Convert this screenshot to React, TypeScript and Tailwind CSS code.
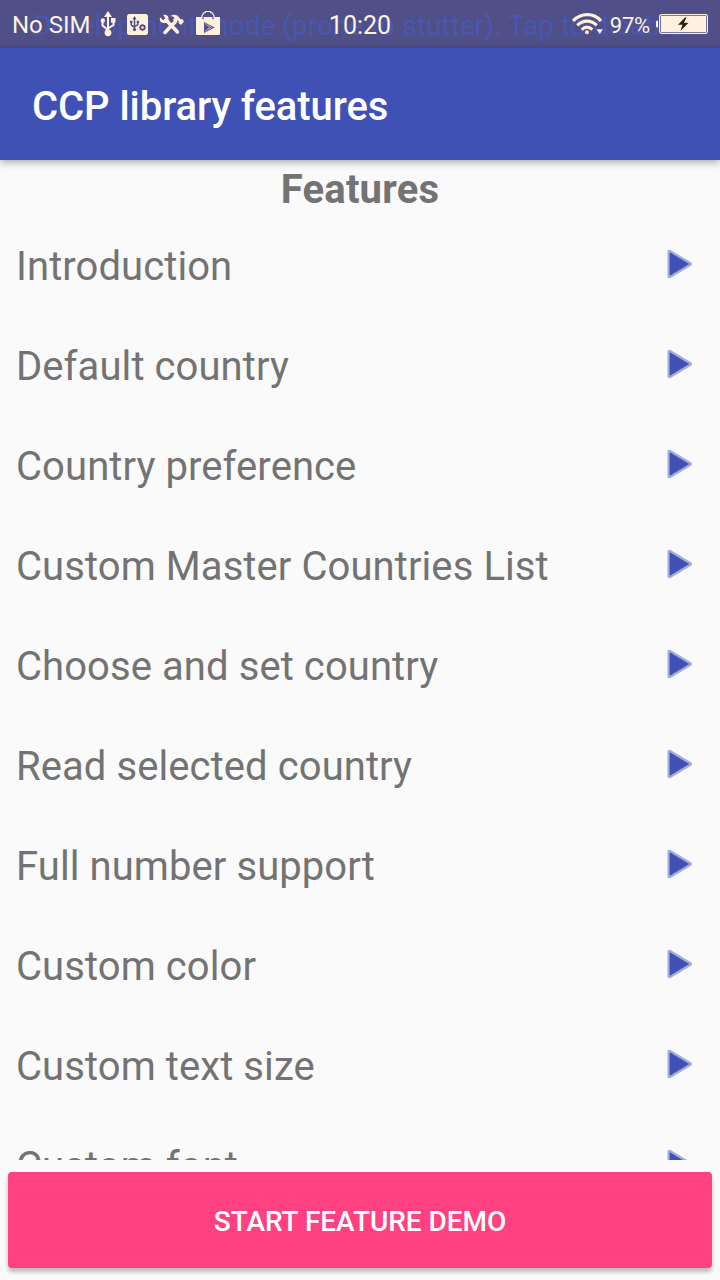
import React from "react";

const features = [
  "Introduction",
  "Default country",
  "Country preference",
  "Custom Master Countries List",
  "Choose and set country",
  "Read selected country",
  "Full number support",
  "Custom color",
  "Custom text size",
  "Custom font",
];

function PlayIcon() {
  return (
    <svg className="mt-[-4px] h-[32px] w-[32px] shrink-0" viewBox="0 0 32 32">
      <path d="M5.500 3.800 26 16 5.500 28.200Z" fill="#a4acda" stroke="#a4acda" strokeWidth="4" strokeLinejoin="round" />
      <path d="M6 4.800 24.600 16 6 27.200Z" fill="#3f51b5" stroke="#3f51b5" strokeWidth=".8" strokeLinejoin="round" />
    </svg>
  );
}

function UsbIcon() {
  return (
    <svg className="ml-[9px] h-[26px] w-[16px] shrink-0" viewBox="0 0 16 26" fill="none" stroke="#fff1dc" strokeWidth="2">
      <path d="M8 4v18M2.500 11v3.500L8 19M13.500 11v3L8 17.500" />
      <path d="M8 0 12 6H4Z" fill="#fff1dc" stroke="none" />
      <circle cx="8" cy="21.800" r="3.400" fill="#fff1dc" stroke="none" />
      <circle cx="2.800" cy="9.500" r="2.200" fill="#fff1dc" stroke="none" />
      <path d="M11 7h4.500v4.500H11z" fill="#fff1dc" stroke="none" />
    </svg>
  );
}

function UsbSettingsIcon() {
  return (
    <svg className="ml-[11px] h-[21px] w-[21px] shrink-0" viewBox="0 0 21 21" fill="none" stroke="#504f88" strokeWidth="1.500">
      <rect width="21" height="21" rx="2.500" fill="#fff1dc" stroke="none" />
      <path d="M7.500 4v12M4.300 8v3l3.200 2.300M10.800 8v2.700l-3.300 2.300" />
      <path d="M7.500 2 9.500 5.200h-4Z" fill="#504f88" stroke="none" />
      <circle cx="7.500" cy="15.600" r="1.600" fill="#504f88" stroke="none" />
      <path d="M3 6.700h2.400v2.300H3zM9.700 6.700H12V9H9.700z" fill="#504f88" stroke="none" />
      <circle cx="15.500" cy="13.500" r="2.100" strokeWidth="1.600" />
      <path d="M15.500 10.200v1.200M15.500 15.600v1.200M12.200 13.500h1.200M17.600 13.500h1.200M13.200 11.200l.9.900M16.900 14.900l.9.900M17.800 11.200l-.9.900M14.100 14.900l-.9.900" />
    </svg>
  );
}

function ToolsIcon() {
  return (
    <svg className="ml-[11px] h-[21px] w-[25px] shrink-0" viewBox="0 0 25 21" fill="none" stroke="#fff1dc">
      <path d="M7 6 18.500 18" strokeWidth="3.500" strokeLinecap="round" />
      <path d="M1 3.200 4.300 6.200 6.400 4.200 4.200 1C8.200.2 10.300 2.800 9.400 6.500L7 9C3 9.800 0 7.500 1 3.200Z" fill="#fff1dc" stroke="none" />
      <path d="M6 18.500 16.500 7.500" strokeWidth="3.500" strokeLinecap="round" />
      <path d="M11.500 2C15-.3 18.500.8 20.500 4L21.700 5.300 23.200 5 25 7.500 22 11 19.500 9 19.700 7.200 18.400 6.200 16.500 8.200 13.800 5.800 15.500 4.200 14.500 2.800Z" fill="#fff1dc" stroke="none" />
    </svg>
  );
}

function StoreIcon() {
  return (
    <svg className="ml-[12px] mt-[-2px] h-[25px] w-[24px] shrink-0" viewBox="0 0 24 25">
      <path d="M6 8V6.500a6 6 0 0 1 12 0V8" fill="none" stroke="#fff1dc" strokeWidth="1.600" />
      <path d="M0 6h24v16.500A1.500 1.500 0 0 1 22.500 24h-21A1.500 1.500 0 0 1 0 22.500Z" fill="#fff1dc" />
      <path d="M7 8.300V6.700a5 5 0 0 1 10 0v1.600" fill="none" stroke="#504f88" strokeWidth="1.200" />
      <path d="M8 11 18.800 16.500 8 22Z" fill="#504f88" />
      <path d="m9 12.500 4.800 4L9 20.500M12 13.500l4.600 3.800M12 19.400l4.600-3.800" fill="none" stroke="#b5abb8" strokeWidth="1" />
    </svg>
  );
}

function WifiIcon() {
  return (
    <svg className="h-[22px] w-[32px] shrink-0" viewBox="0 0 32 22" fill="none" stroke="#fff1dc" strokeWidth="3.200">
      <path d="M1 8C9-.4 22-.4 29 8" />
      <path d="M5.300 12.300C10.700 6.700 19.300 6.700 24.700 12.300" />
      <path d="M9.700 16.600C13 13.500 17 13.500 20.300 16.600" />
      <circle cx="15" cy="19.200" r="2" fill="#fff1dc" stroke="none" />
      <path d="M24.500 16.200H31L27.800 21Z" fill="#fff1dc" stroke="none" />
    </svg>
  );
}

function BatteryIcon() {
  return (
    <svg className="ml-[6px] h-[20px] w-[52px] shrink-0" viewBox="0 0 52 20">
      <path d="M2 6.500C.6 6.500 0 7 0 8v4c0 1 .6 1.500 2 1.500Z" fill="#fff1dc" />
      <rect x="3.600" y=".6" width="47.800" height="18.800" rx="1.800" fill="none" stroke="#fff1dc" strokeWidth="1.200" />
      <rect x="5" y="2" width="45" height="16" fill="#fff1dc" />
      <path d="m29 3.500-7 7.200h4.400L24.500 17l8-8.200h-4.600L30.500 3.500Z" fill="#292014" />
    </svg>
  );
}

function StatusBar() {
  return (
    <header className="relative h-[48px] bg-[#504f88] text-[#fff1dc]">
      <div className="absolute left-[33px] top-[9px] whitespace-nowrap text-[28px] leading-[33px] tracking-[0.03px] text-[#4957ae]">
        Development mode (prone to stutter). Tap to disable.
      </div>
      <div className="relative grid h-full grid-cols-[1fr_auto_1fr] items-center">
        <div className="flex items-center pl-[12px]">
          <span className="mt-[2px] whitespace-nowrap text-[24px] leading-[28px]">No SIM</span>
          <UsbIcon />
          <UsbSettingsIcon />
          <ToolsIcon />
          <StoreIcon />
        </div>
        <time className="mt-[4px] text-[25px] leading-[28px]">10:20</time>
        <div className="flex items-center justify-end pr-[12px]">
          <WifiIcon />
          <span className="ml-[6px] mt-[4px] text-[22px] leading-[26px] tracking-[-0.2px]">97%</span>
          <BatteryIcon />
        </div>
      </div>
    </header>
  );
}

export default function App() {
  return (
    <div className="flex h-[1280px] w-[720px] flex-col overflow-hidden bg-[#fafafa] font-['Roboto',sans-serif]">
      <StatusBar />
      <div className="relative z-10 flex h-[112px] shrink-0 items-center bg-[#3f51b5] px-[32px] pt-[6px] shadow-[0_2px_8px_rgba(0,0,0,0.35)]">
        <h1 className="text-[40px] font-medium leading-[48px] tracking-[-0.06px] text-white">CCP library features</h1>
      </div>
      <main className="h-[1000px] shrink-0 overflow-hidden text-[#737373]">
        <h2 className="h-[56px] pt-[6px] text-center text-[40px] font-bold leading-[47px] tracking-[0.2px]">Features</h2>
        <ul>
          {features.map((feature) => (
            <li key={feature} className="flex h-[100px] items-center justify-between pl-[16px] pr-[24px]">
              <span className="text-[40px] leading-[47px] tracking-[0.08px]">{feature}</span>
              <PlayIcon />
            </li>
          ))}
        </ul>
      </main>
      <div className="flex h-[120px] shrink-0 px-[8px] pb-[12px] pt-[12px]">
        <button className="flex-1 rounded-[4px] bg-[#ff4081] pt-[2px] text-[28px] font-medium leading-[33px] tracking-[-0.03px] text-white shadow-[0_4px_4px_rgba(0,0,0,0.25)]">
          START FEATURE DEMO
        </button>
      </div>
    </div>
  );
}
